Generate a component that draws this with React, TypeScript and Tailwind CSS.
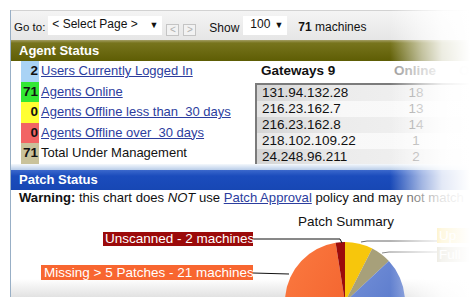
import React from "react";

const rows = [
  { n: "2", bg: "bg-[#a9d3f5]", text: "Users Currently Logged In", link: true },
  { n: "71", bg: "bg-[#33e833]", text: "Agents Online", link: true },
  { n: "0", bg: "bg-[#ffff33]", text: "Agents Offline less than  30 days", link: true },
  { n: "0", bg: "bg-[#f26464]", text: "Agents Offline over  30 days", link: true },
  { n: "71", bg: "bg-[#c9c29a]", text: "Total Under Management", link: false },
];

const gateways = [
  ["131.94.132.28", "18"],
  ["216.23.162.7", "13"],
  ["216.23.162.8", "14"],
  ["218.102.109.22", "1"],
  ["24.248.96.211", "2"],
];

function Pie() {
  const cx = 334;
  const cy = 96;
  const r = 60;
  const pt = (a: number) => {
    const rad = (a * Math.PI) / 180;
    return [cx + r * Math.sin(rad), cy - r * Math.cos(rad)];
  };
  const slice = (a0: number, a1: number) => {
    const [x0, y0] = pt(a0);
    const [x1, y1] = pt(a1);
    const large = a1 - a0 > 180 ? 1 : 0;
    return `M${cx},${cy} L${x0},${y0} A${r},${r} 0 ${large} 1 ${x1},${y1} Z`;
  };
  return (
    <svg className="absolute left-0 top-0" width="459" height="91" viewBox="0 0 459 91">
      <defs>
        <linearGradient id="blue" x1="0" y1="0" x2="1" y2="1">
          <stop offset="0" stopColor="#7d98dc" />
          <stop offset="1" stopColor="#4a6cc4" />
        </linearGradient>
        <linearGradient id="orange" x1="0" y1="0" x2="1" y2="1">
          <stop offset="0" stopColor="#fb7a40" />
          <stop offset="1" stopColor="#f2602c" />
        </linearGradient>
      </defs>
      <path d={slice(0, 27)} fill="#f7c60c" />
      <path d={slice(27, 47)} fill="#a7a07a" />
      <path d={slice(47, 200)} fill="url(#blue)" />
      <path d={slice(200, 351)} fill="url(#orange)" />
      <path d={slice(351, 360)} fill="#9b0b0b" />
      <polyline points="242,33 329,33 331,37" fill="none" stroke="#111" strokeWidth="1" />
      <polyline points="242,67 278,68" fill="none" stroke="#111" strokeWidth="1" />
      <polyline points="350,36 356,35 426,35" fill="none" stroke="#666" strokeWidth="1" />
      <polyline points="371,47 378,46 426,46" fill="none" stroke="#888" strokeWidth="1" />
    </svg>
  );
}

export default function App() {
  return (
    <div
      className="relative w-[470px] h-[300px] overflow-hidden bg-white text-[#111]"
      style={{ fontFamily: '"Liberation Sans", Arial, sans-serif' }}
    >
      <div className="ml-[10px] mt-[10px] h-[287px] border-l border-[#98afc6] flex flex-col">
        {/* toolbar */}
        <div className="h-[30px] border-t border-[#d2d2d2] bg-[linear-gradient(#f4f4f4,#e6e6e6)] flex items-center text-[12px] shrink-0">
          <span className="ml-[3px] mt-[5px] text-[11.5px]">Go to:</span>
          <div className="ml-[3px] w-[114px] h-[19px] bg-white flex items-start justify-between pl-[4px] pr-[4px] mb-[1px]">
            <span className="leading-[17px]">&lt; Select Page &gt;</span>
            <span className="text-[9px] leading-[19px]">▼</span>
          </div>
          <div className="ml-[4px] mt-[8px] w-[13px] h-[12px] border border-[#c4c4c4] bg-[#f2f2f2] text-[#b0b0b0] text-[10px] leading-[10px] text-center">&lt;</div>
          <div className="ml-[4px] mt-[8px] w-[13px] h-[12px] border border-[#c4c4c4] bg-[#f2f2f2] text-[#b0b0b0] text-[10px] leading-[10px] text-center">&gt;</div>
          <span className="ml-[13px] mt-[4px]">Show</span>
          <div className="ml-[4px] w-[44px] h-[19px] bg-white flex items-start justify-between pl-[7px] pr-[4px] mb-[1px]">
            <span className="leading-[17px]">100</span>
            <span className="text-[9px] leading-[19px]">▼</span>
          </div>
          <span className="ml-[11px] mt-[2px]"><b>71</b> machines</span>
        </div>

        {/* Agent Status header */}
        <div className="h-[21px] shrink-0 bg-[linear-gradient(#a39d63_0px,#77741d_3px,#5e5d04_100%)] text-white font-bold text-[13px] leading-[21px] pl-[8px]">
          Agent Status
        </div>

        {/* agent content */}
        <div className="h-[103px] shrink-0 flex">
          <div className="w-[244px] shrink-0 pl-[10px] flex flex-col text-[13px]">
            {rows.map((r) => (
              <div key={r.text} className="h-[20.5px] flex items-stretch">
                <div className={`${r.bg} w-[18px] text-right font-bold text-[13.5px] leading-[20.5px] pr-[1px]`}>{r.n}</div>
                <div className="ml-[2px] leading-[20.5px] whitespace-pre">
                  {r.link ? (
                    <span className="text-[#2c3d9e] underline">{r.text}</span>
                  ) : (
                    <span>{r.text}</span>
                  )}
                </div>
              </div>
            ))}
          </div>
          <div className="flex-1 min-w-0 flex flex-col overflow-hidden">
            <div className="h-[22px] flex items-center text-[13.5px] font-bold pb-[2px] whitespace-nowrap">
              <span className="ml-[6px] w-[133px] shrink-0">Gateways 9</span>
              <span className="text-[#9a9a9a] shrink-0">Online</span>
              <span className="ml-[23px] text-[#cccccc] shrink-0">Of</span>
            </div>
            <div className="flex-1 border-l-2 border-t-2 border-[#7b7b7b] overflow-hidden text-[13.5px]">
              {gateways.map((g, i) => (
                <div
                  key={g[0]}
                  className={`h-[16px] flex leading-[16px] ${
                    i % 2 === 0
                      ? "bg-[linear-gradient(to_right,#d4d4d4,#ececec_40%,#f2f2f2)]"
                      : "bg-[linear-gradient(to_right,#e6e6e6,#f8f8f8_40%,#fafafa)]"
                  }`}
                >
                  <span className="pl-[5px] w-[129px] shrink-0">{g[0]}</span>
                  <span className="w-[60px] shrink-0 text-center text-[#8a8a8a]">{g[1]}</span>
                </div>
              ))}
            </div>
          </div>
        </div>

        {/* strip */}
        <div className="h-[6px] shrink-0 bg-[linear-gradient(#f4f8fc,#b9cde9)]" />

        {/* Patch Status header */}
        <div className="h-[20px] shrink-0 bg-[linear-gradient(#3b68cc,#1b4cbc_30%,#1747b4)] text-white font-bold text-[13px] leading-[20px] pl-[8px]">
          Patch Status
        </div>

        {/* warning */}
        <div className="h-[16px] shrink-0 pl-[8px] text-[13.1px] leading-[16px] whitespace-nowrap">
          <b>Warning:</b> this chart does <i>NOT</i> use{" "}
          <span className="text-[#2c3d9e] underline">Patch Approval</span> policy and may not match
        </div>

        {/* chart */}
        <div className="relative flex-1 bg-[linear-gradient(#ffffff_80%,#e2e2e2)]">
          <Pie />
          <div className="absolute left-[287px] top-[8px] text-[13.5px] leading-[16px]">Patch Summary</div>
          <div className="absolute left-[92px] top-[26px] w-[150px] h-[14px] bg-[#9b0a0a] text-white text-[13.5px] leading-[14px] pl-[2px] whitespace-nowrap">
            Unscanned - 2 machines
          </div>
          <div className="absolute left-[30px] top-[59px] w-[212px] h-[15px] bg-[#f86630] text-white text-[13.5px] leading-[15px] pl-[3px] whitespace-nowrap">
            Missing &gt; 5 Patches - 21 machines
          </div>
          <div className="absolute left-[426px] top-[22px] w-[33px] h-[15px] bg-[#f7c60c] text-white text-[13.5px] leading-[15px] pl-[2px] whitespace-nowrap">
            Up
          </div>
          <div className="absolute left-[426px] top-[41px] w-[33px] h-[15px] bg-[#a7a07a] text-white text-[13.5px] leading-[15px] pl-[2px] whitespace-nowrap">
            Full
          </div>
        </div>
      </div>

      {/* right fade */}
      <div className="absolute right-0 top-0 h-full w-[80px] bg-[linear-gradient(to_right,rgba(255,255,255,0),rgba(255,255,255,0.6)_40%,rgba(255,255,255,0.88)_65%,#ffffff)]" />
    </div>
  );
}
